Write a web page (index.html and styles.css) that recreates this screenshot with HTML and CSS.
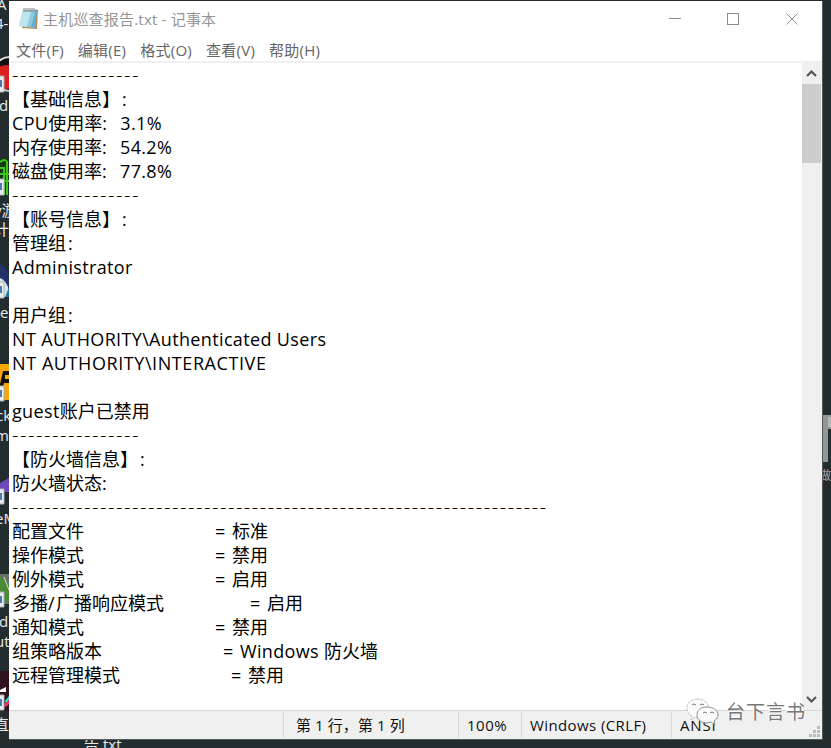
FILE: index.html
```html
<!DOCTYPE html>
<html lang="zh-CN">
<head>
<meta charset="utf-8">
<title>主机巡查报告.txt - 记事本</title>
<link rel="stylesheet" href="styles.css">
</head>
<body>
<svg class="desktop" width="831" height="748" viewBox="0 0 831 748">
  <g class="caption">
    <text x="-3" y="10">A</text><text x="-5" y="29">4-</text><text x="-1" y="111">d</text>
    <text x="-6" y="216">y游</text><text x="-6" y="235">计</text><text x="0" y="318">e</text>
    <text x="-4" y="421">ck</text><text x="-5" y="441">m</text><text x="-5" y="524">eM</text>
    <text x="-1" y="627">d</text><text x="-5" y="647">ut</text><text x="-6" y="730">直播</text>
    <text x="84" y="750">告.txt</text>
  </g>
  <circle cx="10" cy="74" r="17" fill="#111" stroke="#ddd" stroke-width="2"/><circle cx="6" cy="77" r="12" fill="#dc2020"/>
  <path d="M0 160Q4 154 9 159V195H0Z" fill="#173b19"/><path d="M0 162Q5 158 7 162V195M0 168H4V195M0 174H9M0 181H9" fill="none" stroke="#3fc41b" stroke-width="2"/>
  <path d="M0 264Q6 266 9 275V297H0Z" fill="#233269"/><path d="M0 278Q6 280 9 290V297H0Z" fill="#d8e5ed"/><path d="M5 297L9 287V297Z" fill="#207ab2"/>
  <path d="M0 364H9V400H0Z" fill="#f8a608"/><path d="M0 384L3 371H9V375H5V379H9V383H4L3 387H0Z" fill="#111"/>
  <path d="M0 483L9 478V492H0Z" fill="#7048bd"/>
  <path d="M0 574H9V604H0Z" fill="#697267"/><path d="M0 576L9 584V604L0 595Z" fill="#4a8a35"/><path d="M4 577L9 590" stroke="#ddd"/>
  <path d="M0 671H9V711H0Z" fill="#33121f"/><path d="M0 690L6 687V692H0Z" fill="#fff"/><path d="M4 705L9 698V704L6 707Z" fill="#fe2c55"/><path d="M5 701L9 696V699L6 703Z" fill="#25f4ee"/>
  <g fill="#e9edf0" stroke="#aab0b2"><path d="M-1 76H4V92H-1Z"/><path d="M-1 179H4V195H-1Z"/><path d="M-1 282H4V298H-1Z"/><path d="M-1 386H4V401H-1Z"/><path d="M-1 489H4V504H-1Z"/><path d="M-1 592H4V607H-1Z"/><path d="M-1 695H4V710H-1Z"/></g>
  <path d="M0 80H2V87H0ZM0 183H2V190H0ZM0 286H2V293H0ZM0 390H2V397H0ZM0 493H2V500H0ZM0 596H2V603H0ZM0 699H2V706H0Z" fill="#4c78b1"/>
  <path d="M822 415H831V429H828V462H822Z" fill="#8f9896"/><path d="M828 417H831V427H828Z" fill="#b5b9b8"/>
  <text class="edge-caption" x="819" y="480">做</text>
</svg>
<main class="window">
  <header class="titlebar">
    <svg class="app-icon" width="20" height="22" viewBox="0 0 20 22">
      <path d="M5 2L19 2L18 21L3 20Z" fill="#b58c4d"/>
      <path d="M4 2L18 2L16 20L0 18Z" fill="#8fcae0"/>
      <path d="M4 3L12 3L8 19L0 18Z" fill="#bde5f0"/>
      <path d="M16 4L18 4L16 20L12 19Z" fill="#5faed2"/>
      <path d="M5 0V4M7 0V4M9 0V4M11 0V4M13 0V4M15 0V4M17 1V4" stroke="#777" stroke-width=".9"/>
    </svg>
    <h1>主机巡查报告.txt - 记事本</h1>
    <svg class="controls" width="130" height="14" viewBox="0 0 130 14" shape-rendering="crispEdges">
      <path d="M0 6.5H12M58.5 1.5H69.5V12.5H58.5Z" fill="none" stroke="#8e8e8e"/>
      <path d="M117.5 1.5L128.5 12.5M128.5 1.5L117.5 12.5" fill="none" stroke="#8e8e8e" shape-rendering="auto"/>
    </svg>
  </header>
  <nav class="menu"><span>文件(F)</span><span>编辑(E)</span><span>格式(O)</span><span>查看(V)</span><span>帮助(H)</span></nav>
  <section class="editor">
    <div class="document">
      <p class="rule">----------------</p>
      <p>【基础信息】<span class="colon">:</span></p>
      <p><span class="latin">CPU</span>使用率<span class="gap">:</span><span class="latin">3.1%</span></p>
      <p>内存使用率<span class="gap">:</span><span class="latin">54.2%</span></p>
      <p>磁盘使用率<span class="gap">:</span><span class="latin">77.8%</span></p>
      <p class="rule">----------------</p>
      <p>【账号信息】<span class="colon">:</span></p>
      <p>管理组<span class="colon">:</span></p>
      <p class="latin">Administrator</p>
      <p></p>
      <p>用户组<span class="colon">:</span></p>
      <p class="latin">NT AUTHORITY\Authenticated Users</p>
      <p class="capitals">NT AUTHORITY\INTERACTIVE</p>
      <p></p>
      <p><span class="latin">guest</span>账户已禁用</p>
      <p class="rule">----------------</p>
      <p>【防火墙信息】<span class="colon">:</span></p>
      <p>防火墙状态:</p>
      <p class="rule">-------------------------------------------------------------------</p>
      <p><span class="key">配置文件</span><span class="eq">=</span>标准</p>
      <p><span class="key">操作模式</span><span class="eq">=</span>禁用</p>
      <p><span class="key">例外模式</span><span class="eq">=</span>启用</p>
      <p><span class="key wide">多播<span class="slash">/</span>广播响应模式</span><span class="eq">=</span>启用</p>
      <p><span class="key">通知模式</span><span class="eq">=</span>禁用</p>
      <p><span class="key version">组策略版本</span><span class="eq">=</span><span class="latin">Windows </span>防火墙</p>
      <p><span class="key remote">远程管理模式</span><span class="eq">=</span>禁用</p>
    </div>
    <aside class="scrollbar">
      <svg width="19" height="21" viewBox="0 0 19 21"><path d="M5 13L9.5 8.5L14 13" fill="none" stroke="#555" stroke-width="2.2"/></svg>
      <div class="thumb"></div>
      <svg class="down" width="19" height="21" viewBox="0 0 19 21"><path d="M5 8L9.5 12.5L14 8" fill="none" stroke="#555" stroke-width="2.2"/></svg>
    </aside>
  </section>
  <footer class="status">
    <span class="blank"></span><span class="position">第 1 行，第 1 列</span><span class="percent">100%</span><span class="ending">Windows (CRLF)</span><span class="encoding">ANSI</span>
    <svg class="grip" width="12" height="12" viewBox="0 0 12 12"><path d="M8 0H11V3H8ZM4 4H7V7H4ZM8 4H11V7H8ZM0 8H3V11H0ZM4 8H7V11H4ZM8 8H11V11H8Z" fill="#bdbdbd"/></svg>
  </footer>
</main>
<div class="watermark">
  <svg width="34" height="28" viewBox="0 0 34 28">
    <path d="M12 1C5 1 1 5 1 10C1 14 3 17 6 18L5 22L9 19C12 20 15 20 17 18C24 16 25 9 20 4C18 2 15 1 12 1Z" fill="#fafafa" stroke="#aaa" stroke-width=".7" stroke-dasharray="3 1"/>
    <path d="M21 9C15 9 11 12 11 17C11 22 16 25 21 25L25 24L29 27L28 23C31 21 32 19 32 17C32 12 27 9 21 9Z" fill="#fafafa" stroke="#777" stroke-width=".8"/>
    <path d="M6 7Q8 5 10 7M14 7Q16 5 18 7M17 15Q19 13 21 15M24 15Q26 13 28 15" fill="none" stroke="#777"/>
  </svg>
  <span>台下言书</span>
</div>
</body>
</html>
```
FILE: styles.css
```css
* { box-sizing: border-box; }
body {
  margin: 0; width: 831px; height: 748px; overflow: hidden; position: relative;
  padding: 1px 9px 9px; background: #232d30;
  font-family: "Open Sans", "Noto Sans CJK SC", sans-serif;
}
.desktop { position: absolute; left: 0; top: 0; }
.caption { fill: #e7eaeb; font-size: 15px; }
.edge-caption { fill: #a2a7a8; font-size: 12px; }
.window {
  position: relative; width: 814px; height: 739px; background: #fff;
  border-right: 1px solid #555b5d; border-bottom: 1px solid #555b5d;
  display: flex; flex-direction: column;
}
.titlebar { height: 38px; display: flex; align-items: center; padding-left: 10px; flex: none; }
.app-icon { margin-top: -2px; }
h1 { margin: -2px 0 0 4px; font-size: 15px; font-weight: 400; color: #949494; line-height: 36px; letter-spacing: .2px; }
.controls { margin: -2px 23px 0 auto; }
.menu { height: 22px; flex: none; display: flex; gap: 14px; padding-left: 7px; color: #666; font-size: 15px; line-height: 22px; letter-spacing: .25px; }
.menu span { white-space: nowrap; }
.editor { height: 649px; flex: none; border-top: 2px solid #f0f0f0; display: flex; }
.document { flex: 1; padding-left: 3px; color: #000; font-size: 18px; }
p { margin: 0; height: 24px; line-height: 24px; white-space: pre; }
.rule { font-size: 20px; font-weight: 300; letter-spacing: 1.56px; line-height: 23px; }
.latin { letter-spacing: .35px; }
.capitals { letter-spacing: .58px; }
.slash { letter-spacing: 1.5px; }
.colon { margin-left: 2px; }
.gap { display: inline-block; width: 18px; }
.key { display: inline-block; width: 203px; }
.wide { width: 238px; }
.version { width: 211px; }
.remote { width: 219px; }
.eq { display: inline-block; width: 17px; }
.scrollbar { width: 20px; background: #f0f0f0; display: flex; flex-direction: column; }
.scrollbar svg { flex: none; }
.thumb { width: 19px; height: 79px; background: #cdcdcd; }
.down { margin-top: auto; }
.status { flex: 1; background: #f0f0f0; border-top: 1px solid #d5d5d5; display: flex; align-items: center; font-size: 15px; color: #111; position: relative; }
.status > span { height: 26px; line-height: 26px; white-space: pre; border-right: 1px solid #d5d5d5; }
.status .blank { width: 275px; }
.position { width: 175px; padding-left: 12px; letter-spacing: .1px; }
.percent { width: 63px; padding-left: 8px; letter-spacing: .5px; }
.ending { width: 150px; padding-left: 8px; letter-spacing: .4px; }
.status .encoding { padding-left: 8px; border: 0; letter-spacing: .8px; }
.grip { position: absolute; right: 1px; bottom: 1px; }
.watermark { position: absolute; left: 686px; top: 696px; display: flex; align-items: center; font-size: 19px; color: #777; }
.watermark span { margin-left: 6px; line-height: 32px; text-shadow: -1px -1px #fff; letter-spacing: 1px; }
```
